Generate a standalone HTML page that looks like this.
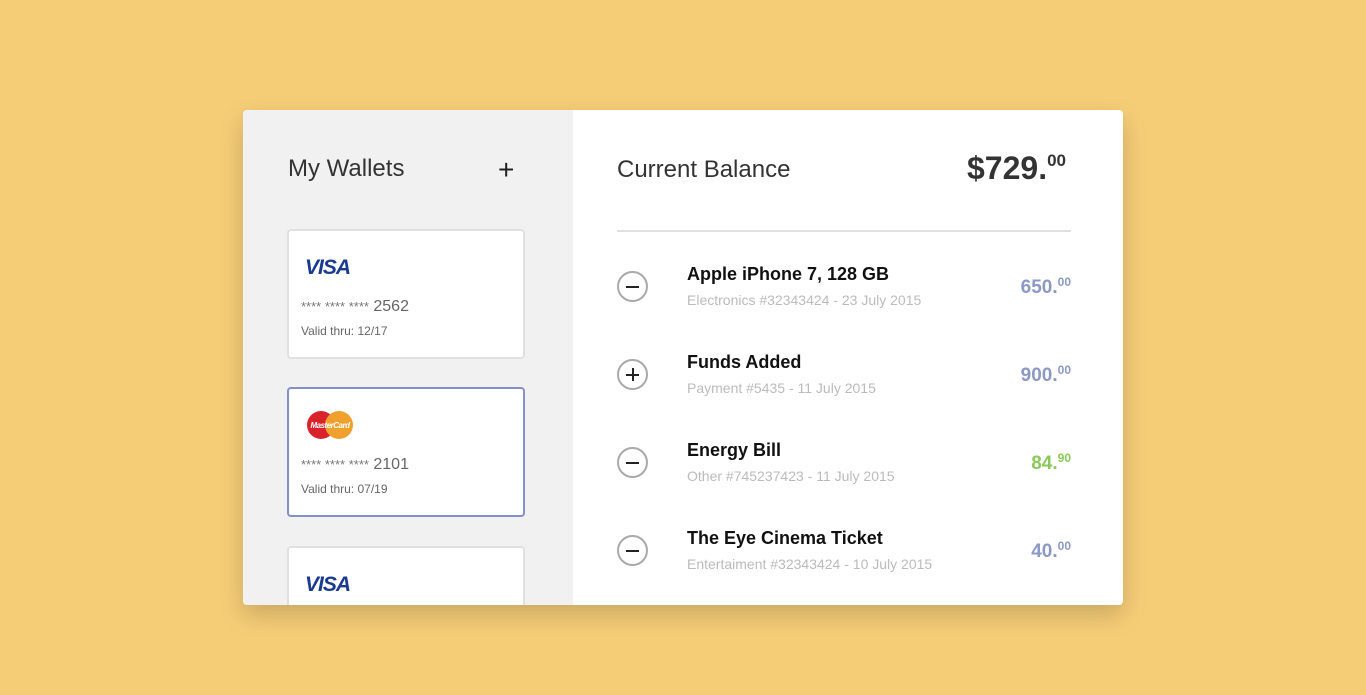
<!DOCTYPE html>
<html><head><style>
*{margin:0;padding:0;box-sizing:border-box}
body{width:1366px;height:695px;background:#f6cd77;font-family:"Liberation Sans",sans-serif;position:relative;overflow:hidden}
.box{position:absolute;left:243px;top:110px;width:880px;height:495px;background:#fff;border-radius:4px;overflow:hidden;box-shadow:0 10px 25px rgba(0,0,0,.18)}
.left{position:absolute;left:0;top:0;width:330px;height:495px;background:#f1f1f1}
.h{position:absolute;font-size:24px;color:#333}
.card{position:absolute;left:44px;width:238px;height:130px;background:#fff;border:2px solid #e0e0e0;border-radius:4px}
.card.sel{border-color:#8590c8}
.num{position:absolute;left:12px;top:67px;font-size:16px;color:#666}
.num small{font-size:13px;color:#777}
.valid{position:absolute;left:12px;top:93px;font-size:12px;color:#666}
.visa{position:absolute;left:16px;top:25px;font-size:21px;font-weight:bold;font-style:italic;color:#1a3a8f;letter-spacing:-1px}
.row{position:absolute;left:374px;width:454px;height:60px}
.ic{position:absolute;left:0;top:14px;width:31px;height:31px;border:2px solid #aaa;border-radius:50%}
.ic:before{content:"";position:absolute;left:7px;top:12.5px;width:13px;height:2px;background:#222}
.ic.p:after{content:"";position:absolute;left:12.5px;top:7px;width:2px;height:13px;background:#222}
.t{position:absolute;left:70px;top:7px;font-size:18px;font-weight:bold;color:#111}
.s{position:absolute;left:70px;top:35px;font-size:14px;color:#bbb}
.a{position:absolute;right:0;top:18px;font-size:19px;font-weight:bold;color:#8c98c6}
.a sup{font-size:12px;vertical-align:7px}
</style></head><body>
<div class="box">
<div class="left">
<div class="h" style="left:45px;top:45px">My Wallets</div>
<div class="h" style="left:255px;top:44px;font-size:28px;color:#222">+</div>
<div class="card" style="top:119px"><div class="visa">VISA</div><div class="num"><small>**** **** ****</small> 2562</div><div class="valid">Valid thru: 12/17</div></div>
<div class="card sel" style="top:277px">
<svg style="position:absolute;left:16px;top:20px" width="52" height="32"><circle cx="16" cy="16" r="14" fill="#d9222a"/><circle cx="34" cy="16" r="14" fill="#f0a02c"/><text x="25" y="19" font-size="8" font-style="italic" font-weight="bold" fill="#fff" text-anchor="middle" font-family="Liberation Sans" letter-spacing="-0.5">MasterCard</text></svg>
<div class="num"><small>**** **** ****</small> 2101</div><div class="valid">Valid thru: 07/19</div></div>
<div class="card" style="top:436px"><div class="visa">VISA</div></div>
</div>
<div class="h" style="left:374px;top:46px">Current Balance</div>
<div class="h" style="left:724px;top:40px;font-size:32px;font-weight:bold;color:#333">$729.<sup style="font-size:17px;vertical-align:13px">00</sup></div>
<div style="position:absolute;left:374px;top:120px;width:454px;height:2px;background:#e0e0e0"></div>
<div class="row" style="top:147px"><div class="ic"></div><div class="t">Apple iPhone 7, 128 GB</div><div class="s">Electronics #32343424 - 23 July 2015</div><div class="a">650.<sup>00</sup></div></div>
<div class="row" style="top:235px"><div class="ic p"></div><div class="t">Funds Added</div><div class="s">Payment #5435 - 11 July 2015</div><div class="a">900.<sup>00</sup></div></div>
<div class="row" style="top:323px"><div class="ic"></div><div class="t">Energy Bill</div><div class="s">Other #745237423 - 11 July 2015</div><div class="a" style="color:#8bc85a">84.<sup>90</sup></div></div>
<div class="row" style="top:411px"><div class="ic"></div><div class="t">The Eye Cinema Ticket</div><div class="s">Entertaiment #32343424 - 10 July 2015</div><div class="a">40.<sup>00</sup></div></div>
</div>
</body></html>
